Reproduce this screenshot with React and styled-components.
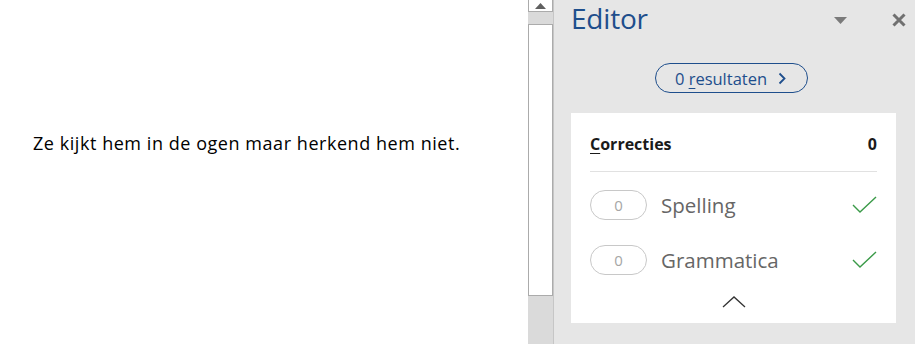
import React from 'react';
import styled, { createGlobalStyle } from 'styled-components';

const GlobalStyle = createGlobalStyle`
  html, body {
    margin: 0;
    padding: 0;
    overflow: hidden;
  }
`;

const Window = styled.div`
  display: flex;
  width: 915px;
  height: 344px;
  background: #fff;
  overflow: hidden;
`;

const Document = styled.div`
  width: 528px;
  padding: 131px 0 0 33px;
  box-sizing: border-box;
  font-family: "Open Sans", Lato, sans-serif;
  font-size: 18px;
  letter-spacing: 0.55px;
  color: #000;
`;

const ScrollBar = styled.div`
  width: 25px;
  display: flex;
  flex-direction: column;
  background: #dadada;
`;

const ScrollButton = styled.div`
  height: 12px;
  background: #fff;
  border: 1px solid #ababab;
  border-top: none;
  box-sizing: border-box;
  display: flex;
  justify-content: center;
  align-items: flex-end;
  padding-bottom: 2px;
`;

const Thumb = styled.div`
  margin-top: 12px;
  height: 272px;
  background: #fff;
  border: 1px solid #ababab;
  box-sizing: border-box;
`;

const Divider = styled.div`
  width: 2px;
  background: #e6e6e6;
  border-left: 1px solid #c6c6c6;
`;

const Panel = styled.div`
  flex: 1;
  background: #e6e6e6;
  display: flex;
  flex-direction: column;
  padding: 0 4px 0 15px;
  font-family: "Open Sans", "Noto Sans", sans-serif;
`;

const Header = styled.div`
  display: flex;
  align-items: center;
  height: 40px;
`;

const Title = styled.div`
  flex: 1;
  font-size: 28px;
  color: #1e4e8c;
  letter-spacing: -0.2px;
  margin-top: -4px;
`;

const IconBtn = styled.div`
  display: flex;
  align-items: center;
  justify-content: center;
  width: ${(p) => p.w}px;
  margin-right: ${(p) => p.gap || 0}px;
`;

const ResultsRow = styled.div`
  display: flex;
  width: 321px;
  justify-content: center;
  margin-top: 23px;
`;

const ResultsPill = styled.div`
  display: flex;
  align-items: center;
  gap: 11px;
  height: 30px;
  padding: 0 21px 0 19px;
  border: 1px solid #1e4e8c;
  border-radius: 15px;
  box-sizing: border-box;
  color: #1e4e8c;
  font-size: 16.5px;
  u {
    text-decoration-thickness: 1px;
    text-underline-offset: 3px;
  }
`;

const Card = styled.div`
  margin-top: 20px;
  width: 325px;
  height: 210px;
  background: #fff;
  padding: 0 19px;
  box-sizing: border-box;
  display: flex;
  flex-direction: column;
`;

const CardHead = styled.div`
  display: flex;
  justify-content: space-between;
  align-items: center;
  height: 59px;
  padding-top: 3px;
  box-sizing: border-box;
  border-bottom: 1px solid #e1e1e1;
  font-weight: 700;
  font-size: 16px;
  color: #1a1a1a;
  u {
    text-decoration-thickness: 1px;
    text-underline-offset: 3px;
  }
`;

const Row = styled.div`
  display: flex;
  align-items: center;
  height: 55px;
  margin-top: ${(p) => (p.first ? 5 : 0)}px;
`;

const CountPill = styled.div`
  width: 57px;
  height: 30px;
  border: 1px solid #c8c8c8;
  border-radius: 15px;
  box-sizing: border-box;
  display: flex;
  align-items: center;
  justify-content: center;
  color: #a6a6a6;
  font-size: 15px;
`;

const Label = styled.div`
  flex: 1;
  margin-left: 14px;
  font-size: 20.5px;
  color: #666;
`;

const Collapse = styled.div`
  display: flex;
  justify-content: center;
  padding-top: 9px;
`;

const Check = () => (
  <svg width="25" height="18" viewBox="0 0 25 18">
    <path d="M1 9 L8 16 L24 1" fill="none" stroke="#3a9a48" strokeWidth="1.4" />
  </svg>
);

export default function App() {
  return (
    <>
      <GlobalStyle />
      <Window>
        <Document>Ze kijkt hem in de ogen maar herkend hem niet.</Document>
        <ScrollBar>
          <ScrollButton>
            <svg width="11" height="6" viewBox="0 0 11 6">
              <path d="M5.5 0 L11 6 L0 6 Z" fill="#606060" />
            </svg>
          </ScrollButton>
          <Thumb />
        </ScrollBar>
        <Divider />
        <Panel>
          <Header>
            <Title>Editor</Title>
            <IconBtn w={14} gap={40}>
              <svg width="13" height="7" viewBox="0 0 13 7">
                <path d="M0 0 L13 0 L6.5 7 Z" fill="#7a7a7a" />
              </svg>
            </IconBtn>
            <IconBtn w={24}>
              <svg width="14" height="14" viewBox="0 0 14 14">
                <path d="M1.5 1.5 L12.5 12.5 M12.5 1.5 L1.5 12.5" stroke="#707070" strokeWidth="3" />
              </svg>
            </IconBtn>
          </Header>
          <ResultsRow>
            <ResultsPill>
              <span>0 <u>r</u>esultaten</span>
              <svg width="8" height="13" viewBox="0 0 8 13">
                <path d="M1.5 1.5 L6.5 6.5 L1.5 11.5" fill="none" stroke="#1e4e8c" strokeWidth="1.8" />
              </svg>
            </ResultsPill>
          </ResultsRow>
          <Card>
            <CardHead>
              <span><u>C</u>orrecties</span>
              <span>0</span>
            </CardHead>
            <Row first>
              <CountPill>0</CountPill>
              <Label>Spelling</Label>
              <Check />
            </Row>
            <Row>
              <CountPill>0</CountPill>
              <Label>Grammatica</Label>
              <Check />
            </Row>
            <Collapse>
              <svg width="24" height="12" viewBox="0 0 24 12">
                <path d="M1 11 L12 1 L23 11" fill="none" stroke="#333" strokeWidth="1.3" />
              </svg>
            </Collapse>
          </Card>
        </Panel>
      </Window>
    </>
  );
}
